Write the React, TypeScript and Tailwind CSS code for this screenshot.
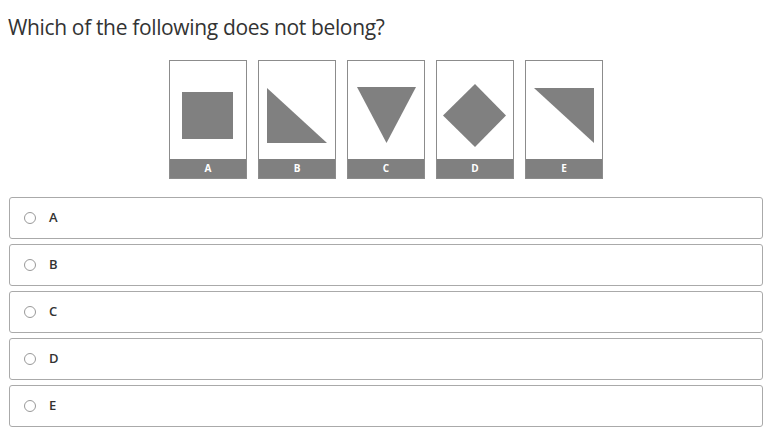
import React from "react";

const shapes: { label: string; el: React.ReactNode }[] = [
  { label: "A", el: <rect x="13" y="32" width="51" height="47" fill="#808080" /> },
  { label: "B", el: <polygon points="9,28 9,83 69,83" fill="#808080" /> },
  { label: "C", el: <polygon points="10,27 69,27 39.5,83" fill="#808080" /> },
  { label: "D", el: <polygon points="7,55.5 39,24 70,55.5 39,87" fill="#808080" /> },
  { label: "E", el: <polygon points="9,28 69,28 69,83" fill="#808080" /> },
];

export default function App() {
  return (
    <div className="w-[779px] h-[437px] bg-white overflow-hidden" style={{ fontFamily: '"Open Sans", "Noto Sans", sans-serif' }}>
      <h1 className="pl-[8px] pt-[12px] text-[21px] leading-[30px] text-[#333] font-normal tracking-[-0.35px]">
        Which of the following does not belong?
      </h1>
      <div className="flex gap-[11px] ml-[169px] mt-[18px]">
        {shapes.map((s) => (
          <div key={s.label} className="w-[78px] h-[119px] border border-[#8c8c8c] flex flex-col">
            <svg width="76" height="98" viewBox="1 1 76 98" className="block">
              {s.el}
            </svg>
            <div className="h-[19px] bg-[#808080] flex items-center justify-center text-white text-[10px] font-bold">
              {s.label}
            </div>
          </div>
        ))}
      </div>
      <div className="flex flex-col gap-[5px] px-[9px] mt-[18px] w-[772px]">
        {["A", "B", "C", "D", "E"].map((l) => (
          <div key={l} className="h-[42px] border border-[#aaaaaa] rounded-[3px] flex items-center pl-[14px]">
            <span className="w-[12px] h-[12px] rounded-full border border-[#999] bg-white" />
            <span className="ml-[13px] text-[13px] font-semibold text-[#333]">{l}</span>
          </div>
        ))}
      </div>
    </div>
  );
}
